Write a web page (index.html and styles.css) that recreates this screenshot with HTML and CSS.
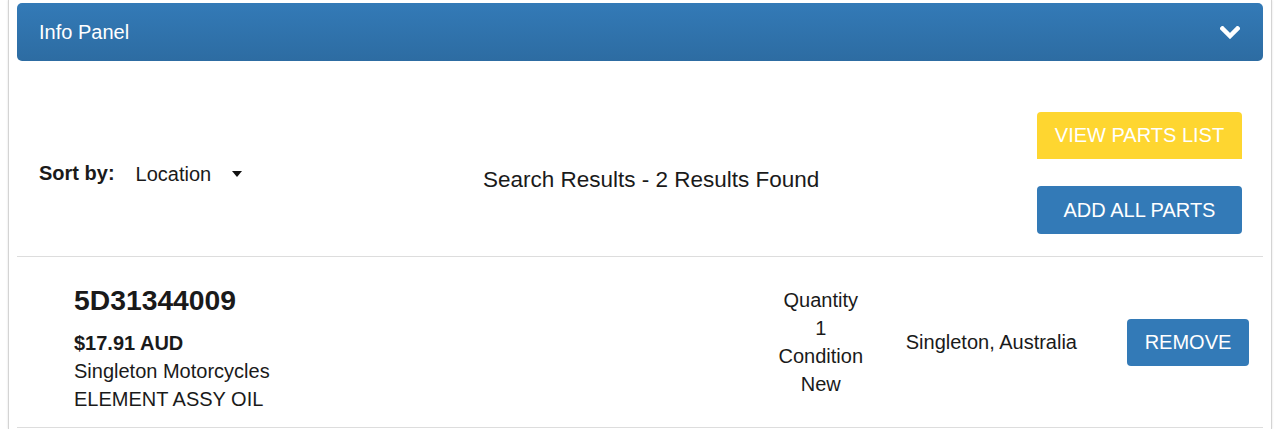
FILE: index.html
```html
<!DOCTYPE html>
<html lang="en">
<head>
    <meta charset="UTF-8">
    <title>Info Panel</title>
    <link rel="stylesheet" href="styles.css">
</head>
<body>

<div class="panel">
    <div class="panel-heading">
        <span>Info Panel</span>
        <svg class="chevron" width="20" height="13" viewBox="0 0 20 13">
            <polyline points="2.5,2.5 10,10 17.5,2.5" fill="none" stroke="#fff" stroke-width="4.5" stroke-linecap="square"/>
        </svg>
    </div>

    <div class="toolbar">
        <div class="sort">
            <span class="sort-label">Sort by:</span>
            <span class="sort-value">Location</span>
            <span class="caret"></span>
        </div>
        <div class="results-title">Search Results - 2 Results Found</div>
        <div class="actions">
            <button class="btn btn-yellow">VIEW PARTS LIST</button>
            <button class="btn btn-blue">ADD ALL PARTS</button>
        </div>
    </div>

    <div class="part-row">
        <div class="part-info">
            <h3 class="part-number">5D31344009</h3>
            <div class="price">$17.91 AUD</div>
            <div>Singleton Motorcycles</div>
            <div>ELEMENT ASSY OIL</div>
        </div>
        <div class="part-qty">
            <div>Quantity</div>
            <div>1</div>
            <div>Condition</div>
            <div>New</div>
        </div>
        <div class="part-location">Singleton, Australia</div>
        <button class="btn btn-blue btn-remove">REMOVE</button>
    </div>
</div>

</body>
</html>
```

FILE: styles.css
```css
body {
    margin: 0;
    font-family: "Liberation Sans", Arial, sans-serif;
    font-size: 20px;
    color: #1a1a1a;
    background: #fff;
}
.panel {
    margin-left: 8px;
    width: 1264px;
    box-sizing: border-box;
    min-height: 429px;
    padding: 3px 8px 0;
    border-left: 1px solid #d4d4d4;
    border-right: 1px solid #d4d4d4;
    box-shadow: 0 0 2px rgba(0, 0, 0, 0.12);
}
.panel-heading {
    height: 58px;
    display: flex;
    align-items: center;
    justify-content: space-between;
    padding: 0 23px 0 22px;
    border-radius: 5px;
    color: #fff;
    background: linear-gradient(#337ab7, #2d6ca2);
}
.chevron {
    display: block;
    margin-top: 1px;
}
.toolbar {
    display: flex;
    align-items: center;
    padding: 51px 21px 22px 22px;
    border-bottom: 1px solid #ddd;
}
.sort {
    display: flex;
    align-items: center;
}
.sort-label {
    font-weight: bold;
}
.sort-value {
    margin-left: 21px;
    padding-top: 2px;
}
.caret {
    margin-left: 21px;
    margin-top: 1px;
    border-left: 5.5px solid transparent;
    border-right: 5.5px solid transparent;
    border-top: 6px solid #111;
}
.results-title {
    flex: 1;
    text-align: center;
    font-size: 22.5px;
    padding: 14px 0 0 23px;
}
.actions {
    display: flex;
    flex-direction: column;
    gap: 27px;
}
.btn {
    font-family: "Liberation Sans", Arial, sans-serif;
    font-size: 20px;
    color: #fff;
    border: none;
    cursor: pointer;
}
.actions .btn {
    width: 205px;
    height: 47px;
}
.btn-yellow {
    background: #fed630;
    border-radius: 4px 4px 0 0;
}
.btn-blue {
    background: #337ab7;
    border-radius: 4px;
}
.actions .btn-blue {
    height: 48px;
}
.part-row {
    display: flex;
    align-items: center;
    height: 171px;
    box-sizing: border-box;
    padding: 0 14px 0 57px;
    border-bottom: 1px solid #ddd;
}
.part-info {
    flex: 1;
    align-self: flex-start;
    padding-top: 28px;
    line-height: 28px;
}
.part-number {
    margin: 0 0 13px;
    font-size: 28.3px;
    line-height: 1.1;
}
.price {
    font-weight: bold;
}
.part-qty {
    width: 100px;
    text-align: center;
    line-height: 28px;
}
.part-location {
    margin: 0 50px 0 35px;
}
.btn-remove {
    width: 122px;
    height: 47px;
}
```
